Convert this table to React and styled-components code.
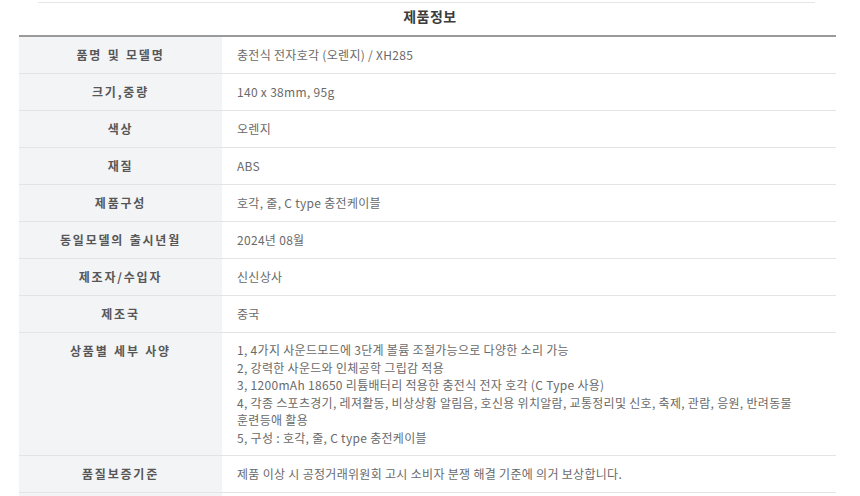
import React from "react";
import styled, { createGlobalStyle } from "styled-components";

const Global = createGlobalStyle`
  html, body { margin: 0; padding: 0; background: #fff; }
  body { font-family: "Noto Sans CJK KR", "Noto Sans", sans-serif; }
`;

const Page = styled.div`
  width: 860px;
  padding-top: 2px;
`;

const TopRule = styled.div`
  margin: 0 45px 0 38px;
  height: 1px;
  background: #e6e6e6;
`;

const Title = styled.h2`
  margin: 0;
  height: 32px;
  padding-top: 3px;
  box-sizing: border-box;
  text-align: center;
  font-size: 14px;
  line-height: 20px;
  font-weight: 700;
  letter-spacing: 0.5px;
  color: #3c3c3c;
`;

const Table = styled.div`
  margin-left: 19px;
  width: 817px;
  border-top: 2px solid #9a9a9a;
  display: grid;
  grid-template-columns: 203px 1fr;
`;

const Label = styled.div`
  background: #f3f4f6;
  border-bottom: 1px solid #e3e4e6;
  padding: ${(p) => (p.$top ? "9px 10px" : "0 10px")};
  min-height: ${(p) => (p.$top ? "0" : "36px")};
  display: flex;
  align-items: ${(p) => (p.$top ? "flex-start" : "center")};
  justify-content: center;
  font-size: 12px;
  font-weight: 700;
  letter-spacing: 1.8px;
  word-spacing: 1px;
  color: #575757;
  line-height: 18px;
`;

const Value = styled.div`
  border-bottom: 1px solid #e3e4e6;
  padding: ${(p) => (p.$multi ? "8px 14px 8px 15px" : "0 14px 0 15px")};
  min-height: ${(p) => (p.$multi ? "0" : "36px")};
  display: flex;
  align-items: center;
  font-size: 12px;
  letter-spacing: 0.3px;
  color: #6a6a6a;
  line-height: ${(p) => (p.$multi ? "17.6px" : "18px")};
`;

const Lines = styled.div`
  display: flex;
  flex-direction: column;
`;

const rows = [
  ["품명 및 모델명", "충전식 전자호각 (오렌지) / XH285"],
  ["크기,중량", "140 x 38mm, 95g"],
  ["색상", "오렌지"],
  ["재질", "ABS"],
  ["제품구성", "호각, 줄, C type 충전케이블"],
  ["동일모델의 출시년월", "2024년 08월"],
  ["제조자/수입자", "신신상사"],
  ["제조국", "중국"],
];

const detail = [
  "1, 4가지 사운드모드에 3단계 볼륨 조절가능으로 다양한 소리 가능",
  "2, 강력한 사운드와 인체공학 그립감 적용",
  "3, 1200mAh 18650 리튬배터리 적용한 충전식 전자 호각 (C Type 사용)",
  "4, 각종 스포츠경기, 레져활동, 비상상황 알림음, 호신용 위치알람, 교통정리및 신호, 축제, 관람, 응원, 반려동물",
  "훈련등애 활용",
  "5, 구성 : 호각, 줄, C type 충전케이블",
];

export default function App() {
  return (
    <Page>
      <Global />
      <TopRule />
      <Title>제품정보</Title>
      <Table>
        {rows.map(([k, v]) => (
          <React.Fragment key={k}>
            <Label>{k}</Label>
            <Value>{v}</Value>
          </React.Fragment>
        ))}
        <Label $top>상품별 세부 사양</Label>
        <Value $multi>
          <Lines>
            {detail.map((l) => (
              <span key={l}>{l}</span>
            ))}
          </Lines>
        </Value>
        <Label>품질보증기준</Label>
        <Value>제품 이상 시 공정거래위원회 고시 소비자 분쟁 해결 기준에 의거 보상합니다.</Value>
        <Label />
        <Value />
      </Table>
    </Page>
  );
}
